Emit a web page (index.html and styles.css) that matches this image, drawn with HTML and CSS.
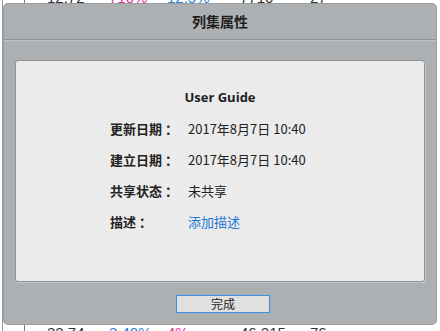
FILE: index.html
```html
<!DOCTYPE html>
<html lang="zh-CN">
<head>
    <meta charset="UTF-8">
    <meta name="viewport" content="width=device-width, initial-scale=1.0">
    <title>列集属性</title>
    <link rel="stylesheet" href="styles.css">
</head>
<body>
    <!-- sheet behind the dialog -->
    <div class="sheet">
        <div class="row top">
            <span class="c1">12.72</span>
            <span class="c2 pink">710%</span>
            <span class="c3 blue">12.5%</span>
            <span class="c4">7710</span>
            <span class="c5">27</span>
        </div>
        <div class="gap"></div>
        <div class="row">
            <span class="c1">32.74</span>
            <span class="c2 blue">3.40%</span>
            <span class="c3 pink">4%</span>
            <span class="c4">46,215</span>
            <span class="c5">76</span>
        </div>
    </div>

    <!-- dialog -->
    <div class="dialog">
        <div class="dialog-title">列集属性</div>
        <div class="dialog-body">
            <div class="panel">
                <div class="doc-name">User Guide</div>
                <div class="props">
                    <div class="label">更新日期<span class="colon">：</span></div>
                    <div class="value">2017年8月7日 10:40</div>
                    <div class="label">建立日期<span class="colon">：</span></div>
                    <div class="value">2017年8月7日 10:40</div>
                    <div class="label">共享状态<span class="colon">：</span></div>
                    <div class="value">未共享</div>
                    <div class="label">描述<span class="colon">：</span></div>
                    <div class="value"><a href="javascript:void(0);" class="link">添加描述</a></div>
                </div>
            </div>
            <div class="actions">
                <button class="done">完成</button>
            </div>
        </div>
    </div>
</body>
</html>
```

FILE: styles.css
```css
body {
    margin: 0;
    background: white;
    font-family: "Noto Sans CJK SC", "Noto Sans", sans-serif;
    overflow: hidden;
    height: 331px;
}
.sheet {
    margin-top: -11px;
    margin-left: 2px;
    border-left: 1px solid #9a9a9a;
    height: 342px;
    overflow: hidden;
    font-family: "Liberation Sans", sans-serif;
    font-size: 15px;
    color: #333;
}
.row {
    display: grid;
    grid-template-columns: 22px 62px 58px 73px 70px 40px;
    height: 18px;
    line-height: 18px;
    border-left: 1px solid #777;
    margin-left: 21px;
}
.row span:first-child {
    grid-column: 2;
}
.gap {
    height: 317px;
    border-left: 1px solid #777;
    margin-left: 21px;
}
.pink {
    color: #e8319b;
}
.blue {
    color: #2a7fd8;
}
.dialog {
    position: absolute;
    left: 4px;
    top: 4px;
    width: 432px;
    height: 320px;
    background: #adb0b3;
    border-radius: 4px;
    box-shadow: 0 0 0 1px #9b9ea1;
    display: flex;
    flex-direction: column;
}
.dialog-title {
    height: 35px;
    line-height: 35px;
    text-align: center;
    font-size: 14px;
    font-weight: bold;
    color: #1e1e1e;
    border-bottom: 1px solid #8d9093;
    box-shadow: 0 1px 0 #bfc2c4;
}
.dialog-body {
    padding: 20px 11px 0;
}
.panel {
    height: 220px;
    background: #ebebeb;
    border: 1px solid #8f9295;
    border-radius: 3px;
    box-shadow: 1px 1px 0 #c3c5c7;
}
.doc-name {
    text-align: center;
    font-family: "Open Sans", "Noto Sans CJK SC", sans-serif;
    font-weight: bold;
    font-size: 13px;
    color: #1e1e1e;
    margin-top: 27px;
    line-height: 18px;
}
.props {
    display: grid;
    grid-template-columns: 78px auto;
    grid-auto-rows: 31px;
    align-items: center;
    margin: 7px 0 0 94px;
    font-size: 13px;
    color: #222;
}
.label {
    font-weight: bold;
}
.colon {
    margin-left: 3px;
}
.link {
    color: #1e78d2;
    text-decoration: none;
}
.actions {
    display: flex;
    justify-content: center;
    padding: 13px 0 0 6px;
}
.done {
    width: 94px;
    height: 18px;
    padding: 0;
    background: #e0e0e0;
    border: 1px solid #3a8ee6;
    font-family: "Noto Sans CJK SC", sans-serif;
    font-size: 12px;
    line-height: 16px;
    color: #222;
}
```
